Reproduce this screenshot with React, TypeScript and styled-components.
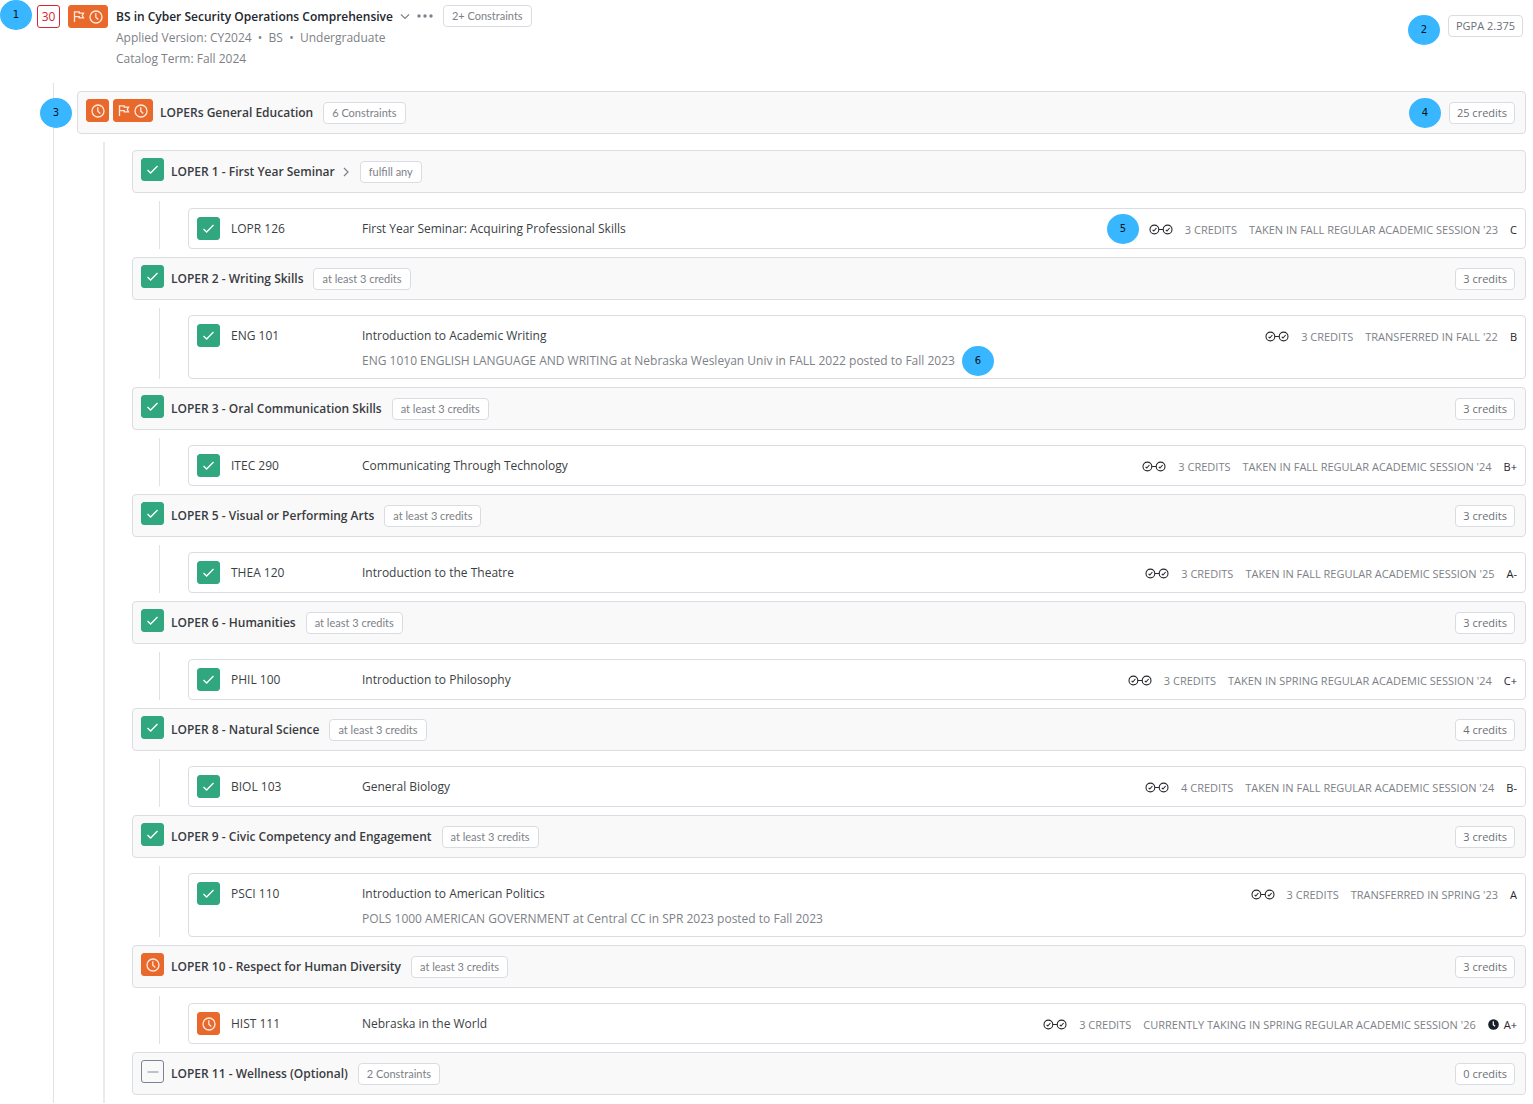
import React from "react";
import styled, { createGlobalStyle } from "styled-components";

const GlobalStyle = createGlobalStyle`
  *, *::before, *::after { box-sizing: border-box; }
  body {
    margin: 0;
    background: #fff;
    color: #3b3f45;
    font: 12px/21px "Open Sans", "Noto Sans", sans-serif;
  }
  h1, h2, h3, p, ul { margin: 0; padding: 0; font: inherit; }
  ul { list-style: none; }
  svg { display: block; flex: none; }
`;

const Page = styled.main`
  padding-right: 7px;
`;

const Header = styled.header`
  display: flex;
  align-items: flex-start;
  min-height: 83px;
`;

const HeaderStatus = styled.div`
  display: flex;
  gap: 8px;
  padding: 5px 8px 0 5px;
`;

const HeaderText = styled.div`
  flex: 1;
  padding-top: 5px;
  font-size: 12px;
  color: #7d8187;
`;

const TitleRow = styled.div`
  display: flex;
  align-items: center;
  height: 22px;
`;

const ProgramTitle = styled.h1`
  font-weight: 600;
  color: #22262e;
`;

const HeaderSide = styled.div`
  display: flex;
  align-items: flex-start;
  gap: 8px;
  padding: 15px 3px 0 0;
`;

const IconButton = styled.button`
  display: grid;
  place-items: center;
  height: 20px;
  margin: 0 0 0 7px;
  padding: 0;
  border: 0;
  background: none;
  color: #7c828d;
  cursor: pointer;
`;

const Pill = styled.span`
  flex: none;
  height: 22px;
  padding: 0 7px;
  border: 1px solid #d9dce3;
  border-radius: 4px;
  background: #fff;
  color: #6c7077;
  font-size: 11px;
  line-height: 20px;
  white-space: nowrap;
`;

const RulePill = styled(Pill)`
  margin-left: 10px;
  padding: 0 8px;
  color: #7d8187;
  font-family: Lato, "Open Sans", sans-serif;
`;

const Callout = styled.span`
  display: grid;
  place-items: center;
  flex: none;
  width: 32px;
  height: 30px;
  border-radius: 50%;
  background: #38b6ff;
  color: #06121c;
  font-family: "DejaVu Sans", sans-serif;
  font-size: 10px;
  line-height: 14px;
`;

const EdgeCallout = styled(Callout)`
  position: absolute;
  top: 6px;
  left: -38px;
`;

const NoteCallout = styled(Callout)`
  margin-left: 7px;
`;

const statusFill = {
  done: "#30a77f",
  progress: "#e9692c",
  none: "#f9f9f9",
};

type Status = keyof typeof statusFill;

const StatusBox = styled.span<{ $status: Status; $wide?: boolean }>`
  display: flex;
  align-items: center;
  justify-content: center;
  gap: 4px;
  flex: none;
  width: ${(p) => (p.$wide ? 40 : 23)}px;
  height: 23px;
  border: 1px solid ${(p) => (p.$status === "none" ? "#7c8392" : statusFill[p.$status])};
  border-radius: 3px;
  background: ${(p) => statusFill[p.$status]};
  color: #fff;
`;

const CountBox = styled.span`
  display: grid;
  place-items: center;
  width: 23px;
  height: 23px;
  border: 1px solid #d8262f;
  border-radius: 3px;
  color: #d8262f;
  font-size: 12px;
`;

const ProgramTree = styled.div`
  margin-left: 53px;
  padding: 8px 0 8px 23px;
  border-left: 1px solid #dfe1e6;
`;

const SectionTree = styled.ul`
  display: flex;
  flex-direction: column;
  gap: 8px;
  margin: 8px 0 -8px 26px;
  padding: 8px 0 8px 27px;
  border-left: 2px solid #eaebef;
`;

const GroupBar = styled.div`
  position: relative;
  display: flex;
  align-items: center;
  min-height: 43px;
  padding: 7px 10px 7px 8px;
  border: 1px solid #dadde3;
  border-radius: 4px;
  background: #f9f9f9;
`;

const GroupStatus = styled.span`
  display: flex;
  align-self: flex-start;
  gap: 4px;
  margin-right: 7px;
`;

const GroupTitle = styled.h2`
  font-size: 12px;
  font-weight: 600;
  line-height: 27px;
  color: #393c42;
`;

const GroupSide = styled.div`
  display: flex;
  align-items: center;
  gap: 8px;
  height: 22px;
  margin-left: auto;
`;

const CourseList = styled.ul`
  margin: 8px 0 0 27px;
  padding: 7px 0 0 28px;
  border-left: 1px solid #dfe1e6;
`;

const CourseRow = styled.li`
  display: grid;
  grid-template-columns: 34px 131px 1fr auto;
  align-items: start;
  min-height: 41px;
  padding: 8px 8px 4px;
  border: 1px solid #dadde3;
  border-radius: 4px;
  background: #fff;
  line-height: 23px;
`;

const CourseTitle = styled.h3`
  line-height: 23px;
`;

const TransferNote = styled.p`
  display: flex;
  align-items: center;
  line-height: 27px;
  height: 27px;
  color: #7d8187;
`;

const Meta = styled.div`
  display: flex;
  align-items: center;
  gap: 12px;
  height: 24px;
  color: #7d8187;
  font-size: 11px;
`;

const MetaCallout = styled(Callout)`
  margin-right: -2px;
`;

const Grade = styled.span`
  display: flex;
  align-items: center;
  gap: 5px;
  color: #22262e;
`;

const CheckIcon = () => (
  <svg width="13" height="13" viewBox="0 0 13 13" fill="none" stroke="currentColor" strokeWidth="1.3" aria-hidden="true">
    <path d="M1.5 7 4.6 10 11.5 3" />
  </svg>
);

const ClockIcon = () => (
  <svg width="14" height="14" viewBox="0 0 14 14" fill="none" stroke="#ffe9df" strokeWidth="1.3" aria-hidden="true">
    <circle cx="7" cy="7" r="6" />
    <path d="M6.8 3.3v3.9l2.5 2.3" />
  </svg>
);

const FlagIcon = () => (
  <svg width="12" height="13" viewBox="0 0 12 13" fill="none" stroke="#ffe9df" strokeWidth="1.3" aria-hidden="true">
    <path d="M1.5 12V1.8h4.7v1.4h4.3L9.3 5.6l1.2 2.3H6.2V6.7H1.5" />
  </svg>
);

const DashIcon = () => (
  <svg width="12" height="12" viewBox="0 0 12 12" stroke="#a4aab8" strokeWidth="1.4" aria-hidden="true">
    <path d="M.5 6h11" />
  </svg>
);

const ChevronDown = () => (
  <svg width="10" height="10" viewBox="0 0 10 10" fill="none" stroke="currentColor" strokeWidth="1.2" aria-hidden="true">
    <path d="m1 3.5 4 4 4-4" />
  </svg>
);

const ChevronRight = () => (
  <svg width="8" height="10" viewBox="0 0 8 10" fill="none" stroke="currentColor" strokeWidth="1.2" aria-hidden="true">
    <path d="m2 1 4 4-4 4" />
  </svg>
);

const MoreIcon = () => (
  <svg width="16" height="4" viewBox="0 0 16 4" fill="currentColor" aria-hidden="true">
    <circle cx="2" cy="2" r="1.7" />
    <circle cx="8" cy="2" r="1.7" />
    <circle cx="14" cy="2" r="1.7" />
  </svg>
);

const LinkedChecks = () => (
  <svg width="24" height="11" viewBox="0 0 24 11" fill="none" stroke="#25282d" strokeWidth="1.1" aria-hidden="true">
    <circle cx="5.4" cy="5.5" r="4.4" />
    <circle cx="18.6" cy="5.5" r="4.4" />
    <path d="M9.8 5.5h4.4M3.6 5.8l1.2 1.2 2.6-3M16.8 5.8 18 7l2.6-3" />
  </svg>
);

const SolidClock = () => (
  <svg width="11" height="11" viewBox="0 0 11 11" aria-hidden="true">
    <circle cx="5.5" cy="5.5" r="5.3" fill="#1b1f28" />
    <path d="M5.3 2.3v3.4l1.8 1.6" fill="none" stroke="#fff" strokeWidth="1.2" />
  </svg>
);

const StatusIcon = ({ status }: { status: Status }) => (
  <StatusBox $status={status}>
    {status === "done" ? <CheckIcon /> : status === "progress" ? <ClockIcon /> : <DashIcon />}
  </StatusBox>
);

const FlagStatus = () => (
  <StatusBox $status="progress" $wide>
    <FlagIcon />
    <ClockIcon />
  </StatusBox>
);

interface Course {
  code: string;
  title: string;
  credits: number;
  term: string;
  grade: string;
  note?: string;
  noteCallout?: number;
  callout?: number;
}

interface Group {
  title: string;
  rule: string;
  status: Status;
  credits?: number;
  expandable?: boolean;
  course?: Course;
}

const groups: Group[] = [
  {
    title: "LOPER 1 - First Year Seminar", rule: "fulfill any", status: "done", expandable: true,
    course: { code: "LOPR 126", title: "First Year Seminar: Acquiring Professional Skills", credits: 3, term: "TAKEN IN FALL REGULAR ACADEMIC SESSION '23", grade: "C", callout: 5 },
  },
  {
    title: "LOPER 2 - Writing Skills", rule: "at least 3 credits", status: "done", credits: 3,
    course: { code: "ENG 101", title: "Introduction to Academic Writing", credits: 3, term: "TRANSFERRED IN FALL '22", grade: "B", note: "ENG 1010 ENGLISH LANGUAGE AND WRITING at Nebraska Wesleyan Univ in FALL 2022 posted to Fall 2023", noteCallout: 6 },
  },
  {
    title: "LOPER 3 - Oral Communication Skills", rule: "at least 3 credits", status: "done", credits: 3,
    course: { code: "ITEC 290", title: "Communicating Through Technology", credits: 3, term: "TAKEN IN FALL REGULAR ACADEMIC SESSION '24", grade: "B+" },
  },
  {
    title: "LOPER 5 - Visual or Performing Arts", rule: "at least 3 credits", status: "done", credits: 3,
    course: { code: "THEA 120", title: "Introduction to the Theatre", credits: 3, term: "TAKEN IN FALL REGULAR ACADEMIC SESSION '25", grade: "A-" },
  },
  {
    title: "LOPER 6 - Humanities", rule: "at least 3 credits", status: "done", credits: 3,
    course: { code: "PHIL 100", title: "Introduction to Philosophy", credits: 3, term: "TAKEN IN SPRING REGULAR ACADEMIC SESSION '24", grade: "C+" },
  },
  {
    title: "LOPER 8 - Natural Science", rule: "at least 3 credits", status: "done", credits: 4,
    course: { code: "BIOL 103", title: "General Biology", credits: 4, term: "TAKEN IN FALL REGULAR ACADEMIC SESSION '24", grade: "B-" },
  },
  {
    title: "LOPER 9 - Civic Competency and Engagement", rule: "at least 3 credits", status: "done", credits: 3,
    course: { code: "PSCI 110", title: "Introduction to American Politics", credits: 3, term: "TRANSFERRED IN SPRING '23", grade: "A", note: "POLS 1000 AMERICAN GOVERNMENT at Central CC in SPR 2023 posted to Fall 2023" },
  },
  {
    title: "LOPER 10 - Respect for Human Diversity", rule: "at least 3 credits", status: "progress", credits: 3,
    course: { code: "HIST 111", title: "Nebraska in the World", credits: 3, term: "CURRENTLY TAKING IN SPRING REGULAR ACADEMIC SESSION '26", grade: "A+" },
  },
  { title: "LOPER 11 - Wellness (Optional)", rule: "2 Constraints", status: "none", credits: 0 },
];

const CourseItem = ({ course, status }: { course: Course; status: Status }) => (
  <CourseRow>
    <StatusIcon status={status} />
    <span>{course.code}</span>
    <div>
      <CourseTitle>{course.title}</CourseTitle>
      {course.note && (
        <TransferNote>
          {course.note}
          {course.noteCallout && <NoteCallout>{course.noteCallout}</NoteCallout>}
        </TransferNote>
      )}
    </div>
    <Meta>
      {course.callout && <MetaCallout>{course.callout}</MetaCallout>}
      <LinkedChecks />
      <span>{course.credits} CREDITS</span>
      <span>{course.term}</span>
      <Grade>
        {status === "progress" && <SolidClock />}
        {course.grade}
      </Grade>
    </Meta>
  </CourseRow>
);

const GroupItem = ({ group }: { group: Group }) => (
  <li>
    <GroupBar>
      <GroupStatus>
        <StatusIcon status={group.status} />
      </GroupStatus>
      <GroupTitle>{group.title}</GroupTitle>
      {group.expandable && (
        <IconButton type="button" aria-label="Expand">
          <ChevronRight />
        </IconButton>
      )}
      <RulePill>{group.rule}</RulePill>
      {group.credits !== undefined && (
        <GroupSide>
          <Pill>{group.credits} credits</Pill>
        </GroupSide>
      )}
    </GroupBar>
    {group.course && (
      <CourseList>
        <CourseItem course={group.course} status={group.status} />
      </CourseList>
    )}
  </li>
);

export default function App() {
  return (
    <Page>
      <GlobalStyle />
      <Header>
        <Callout>1</Callout>
        <HeaderStatus>
          <CountBox>30</CountBox>
          <FlagStatus />
        </HeaderStatus>
        <HeaderText>
          <TitleRow>
            <ProgramTitle>BS in Cyber Security Operations Comprehensive</ProgramTitle>
            <IconButton type="button" aria-label="Collapse">
              <ChevronDown />
            </IconButton>
            <IconButton type="button" aria-label="More options">
              <MoreIcon />
            </IconButton>
            <RulePill>2+ Constraints</RulePill>
          </TitleRow>
          <p>Applied Version: CY2024 &nbsp;•&nbsp; BS &nbsp;•&nbsp; Undergraduate</p>
          <p>Catalog Term: Fall 2024</p>
        </HeaderText>
        <HeaderSide>
          <Callout>2</Callout>
          <Pill>PGPA 2.375</Pill>
        </HeaderSide>
      </Header>
      <ProgramTree>
        <GroupBar>
          <EdgeCallout>3</EdgeCallout>
          <GroupStatus>
            <StatusIcon status="progress" />
            <FlagStatus />
          </GroupStatus>
          <GroupTitle>LOPERs General Education</GroupTitle>
          <RulePill>6 Constraints</RulePill>
          <GroupSide>
            <Callout>4</Callout>
            <Pill>25 credits</Pill>
          </GroupSide>
        </GroupBar>
        <SectionTree>
          {groups.map((group) => (
            <GroupItem key={group.title} group={group} />
          ))}
        </SectionTree>
      </ProgramTree>
    </Page>
  );
}
